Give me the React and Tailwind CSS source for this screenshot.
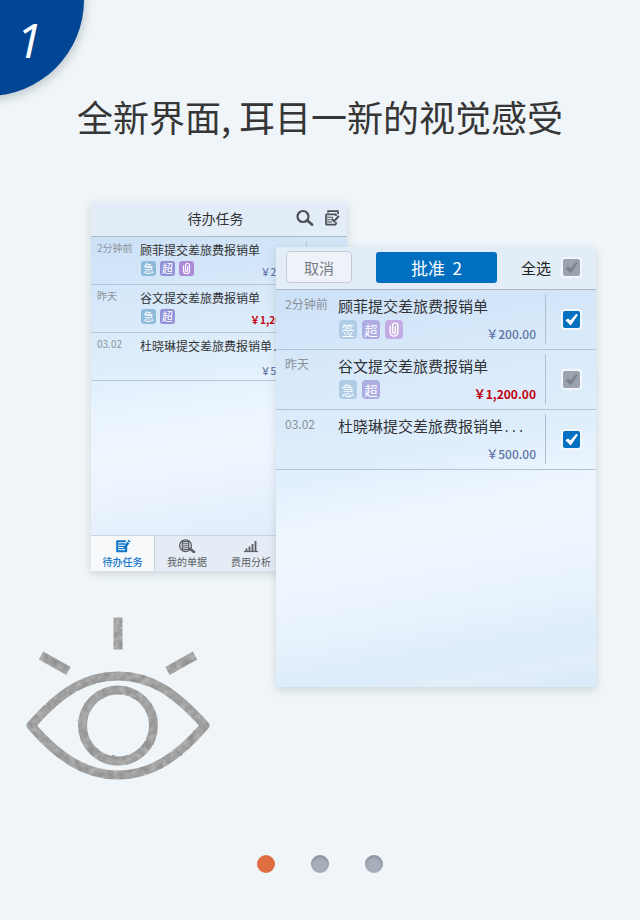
import React from "react";

const TONES = {
  blue: "bg-[#8dbad9]",
  violet: "bg-[#9091d8]",
  purple: "bg-[#ad8ad8]",
  paleBlue: "bg-[#aecde5]",
  paleViolet: "bg-[#aeade3]",
  palePurple: "bg-[#c3ace3]",
};

const pendingTasks = [
  { time: "2分钟前", title: "顾菲提交差旅费报销单", tags: [["急", "blue"], ["超", "violet"], ["clip", "purple"]], price: "￥200.00" },
  { time: "昨天", title: "谷文提交差旅费报销单", tags: [["急", "blue"], ["超", "violet"]], price: "￥1,200.00", urgent: true },
  { time: "03.02", title: "杜晓琳提交差旅费报销单", more: true, tags: [], price: "￥500.00" },
];

const approvalTasks = [
  { time: "2分钟前", title: "顾菲提交差旅费报销单", tags: [["签", "paleBlue"], ["超", "paleViolet"], ["clip", "palePurple"]], price: "￥200.00", checked: true },
  { time: "昨天", title: "谷文提交差旅费报销单", tags: [["急", "paleBlue"], ["超", "paleViolet"]], price: "￥1,200.00", urgent: true, checked: false },
  { time: "03.02", title: "杜晓琳提交差旅费报销单", more: true, tags: [], price: "￥500.00", checked: true },
];

function ClipIcon({ className }) {
  return (
    <svg viewBox="0 0 18 20" className={className} fill="none" stroke="white" strokeWidth="1.5" strokeLinecap="round" aria-hidden="true">
      <path d="M5 6.5v6.5a4 4 0 0 0 8 0V6a2.700 2.700 0 0 0-5.400 0v6.500a1.400 1.400 0 0 0 2.800 0V7" />
    </svg>
  );
}

function Tag({ label, tone, small }) {
  const size = small ? "h-[15px] w-[15px] rounded-[3px] text-[11px]" : "h-[19px] w-[18px] rounded text-[13px]";
  return (
    <span className={`flex items-center justify-center leading-none text-white ${size} ${TONES[tone]}`}>
      {label === "clip" ? <ClipIcon className="h-full w-full" /> : label}
    </span>
  );
}

function Dots({ small }) {
  return <span className={`font-['Liberation_Mono',monospace] ${small ? "text-[10px]" : "text-xs"}`}>...</span>;
}

function Tick({ label, defaultChecked }) {
  return (
    <span className="relative flex h-[21px] w-[21px]">
      <input
        type="checkbox"
        aria-label={label}
        defaultChecked={defaultChecked}
        className="peer h-full w-full appearance-none rounded border-2 border-[#f3f7fc] bg-[#9ba4ae] checked:bg-[#0070c1]"
      />
      <svg
        viewBox="0 0 21 21"
        className="pointer-events-none absolute inset-0 h-full w-full fill-[#7c858f] peer-checked:fill-white"
        aria-hidden="true"
      >
        <path d="M4.400 11.300 7 9.400l2.300 2.200 6-6.800 1.600 1.200L9.700 16.600z" />
      </svg>
    </span>
  );
}

function SearchIcon() {
  return (
    <svg viewBox="0 0 18 18" className="h-[18px] w-[18px]" fill="none" stroke="#4c4f54" aria-hidden="true">
      <circle cx="7" cy="7.500" r="5.500" strokeWidth="2.200" />
      <path d="m11.300 11.500 4.700 4" strokeWidth="2.800" strokeLinecap="round" />
    </svg>
  );
}

function BatchIcon() {
  return (
    <svg viewBox="0 0 16 16" className="h-4 w-4" fill="none" stroke="#4c4f54" aria-hidden="true">
      <path d="M4 2.800V1.200H14V4" strokeWidth="1.700" strokeLinejoin="round" />
      <path d="M12 6V4.300H2.500L2 5v9l.5.700h8.800L12 14v-2" strokeWidth="1.700" strokeLinejoin="round" />
      <path d="M3 7.300h6M3 9.700h3.500M3 12h5" strokeWidth="1.100" />
      <path d="m7.500 8.800 2.600 2.400 4.800-5.400" strokeWidth="2" />
    </svg>
  );
}

function TaskIcon() {
  return (
    <svg viewBox="0 0 16 14" className="h-[14px] w-4" fill="none" stroke="currentColor" aria-hidden="true">
      <path d="M10.800 2.200H2.200v10h9V8" strokeWidth="2" strokeLinejoin="round" />
      <path d="M3.500 5h7M3.500 7.300h6M3.500 9.700h4.500" strokeWidth="1.300" />
      <path d="m9 10 4.300-6.500" strokeWidth="2.400" />
      <path d="m13.700 2.900.8-1.400" strokeWidth="2.600" />
    </svg>
  );
}

function BillIcon() {
  return (
    <svg viewBox="0 0 18 14" className="h-[14px] w-[18px]" fill="none" stroke="currentColor" aria-hidden="true">
      <circle cx="7.500" cy="6.700" r="5.900" strokeWidth="1.300" />
      <path d="M4.300 2.700h6.400v8H4.300z" strokeWidth="1.200" />
      <path d="M4.500 4.700h6M4.500 6.700h6M4.500 8.700h6" strokeWidth="1.100" />
      <path d="m12 9.800 4 3.200" strokeWidth="2.600" strokeLinecap="round" />
    </svg>
  );
}

function ChartIcon() {
  return (
    <svg viewBox="0 0 16 14" className="h-[14px] w-4" fill="none" stroke="currentColor" aria-hidden="true">
      <path d="M1 12.500h14" strokeWidth="1.200" />
      <path d="M3.500 12V9.500M6.500 12V7.500M9.500 12V5M12.500 12V2" strokeWidth="1.800" />
    </svg>
  );
}

function TaskListScreen() {
  const tabs = [
    ["待办任务", TaskIcon],
    ["我的单据", BillIcon],
    ["费用分析", ChartIcon],
  ];
  return (
    <section className="col-start-1 row-start-1 ml-[67px] flex h-[369px] w-64 flex-col self-start justify-self-start bg-[linear-gradient(172deg,#cde1f7_9%,#d5e7f9_24%,#dfeefc_42%,#edf6fe_58%,#eef5fe_70%,#e3effc_84%,#dceafa_92%)] shadow-[0_3px_8px_rgba(90,100,105,0.22)]">
      <header className="grid h-[35px] grid-cols-3 items-center border-b border-[#adb9c8] bg-[#e3edf8] pb-[2px] pr-[7px]">
        <h2 className="col-start-2 whitespace-nowrap text-center text-sm leading-none text-[#333]">待办任务</h2>
        <div className="flex items-center justify-end gap-[10px]">
          <button type="button" aria-label="搜索"><SearchIcon /></button>
          <button type="button" aria-label="批量"><BatchIcon /></button>
        </div>
      </header>
      <ul>
        {pendingTasks.map((task) => (
          <li key={task.title} className="flex h-[48px] border-b border-[#b9c6d6] pl-[6px] pt-1">
            <time className="w-[43px] shrink-0 whitespace-nowrap text-[10px] leading-[14px] text-[#8d949d]">{task.time}</time>
            <div className="flex min-w-0 flex-1 flex-col">
              <p className="whitespace-nowrap text-xs leading-[18px] text-[#333]">
                {task.title}
                {task.more && <Dots small />}
              </p>
              <div className="flex items-start justify-between">
                <span className="flex gap-1 pl-px pt-[2px]">
                  {task.tags.map(([label, tone]) => <Tag key={label} label={label} tone={tone} small />)}
                </span>
                <span className={`mt-[5px] text-[10px] leading-[16px] ${task.urgent ? "font-bold text-[#c3000e]" : "font-medium text-[#5b6fa5]"}`}>
                  {task.price}
                </span>
              </div>
            </div>
            <span className="ml-1 mr-10 h-10 w-px bg-[#b9c8d9]" />
          </li>
        ))}
      </ul>
      <nav className="mt-auto grid h-9 grid-cols-4 border-t border-[#c9d2dd] bg-[#e5ecf5]">
        {tabs.map(([label, Icon], i) => (
          <button
            key={label}
            type="button"
            className={`flex flex-col items-center gap-[2px] pt-[3px] text-[10px] leading-[14px] ${i === 0 ? "border-r border-[#c9d2dd] bg-[#f7f9fb] font-medium text-[#0d74c8]" : "text-[#5a5d62]"}`}
          >
            <Icon />
            {label}
          </button>
        ))}
      </nav>
    </section>
  );
}

function ApprovalScreen() {
  return (
    <section className="z-10 col-start-1 row-start-1 mr-5 mt-[45px] h-[440px] w-80 justify-self-end bg-[linear-gradient(170deg,#cde1f7_9%,#d8e9fa_28%,#dfeefc_46%,#eef6fe_58%,#eff5fe_70%,#e8f3fd_78%,#e3effb_84%,#dcecfa_90%,#e2eefa_94%,#d9eaf9_100%)] shadow-[0_3px_8px_rgba(90,100,105,0.22)]">
      <header className="flex h-[43px] items-center border-b border-[#a9b6c6] bg-[#e3edf8] pb-[2px] pl-[10px]">
        <button type="button" className="h-8 w-[66px] rounded border border-[#c5ccd7] bg-[#eff3f9] text-[15px] leading-none text-[#777c84]">
          取消
        </button>
        <button type="button" className="ml-6 h-[31px] w-[121px] rounded-[3px] bg-[#006fc0] text-[17px] leading-none text-white">
          批准&nbsp; 2
        </button>
        <div className="ml-auto flex items-center gap-[10px] pr-[14px] text-[15px] leading-none text-[#222]">
          <span>全选</span>
          <Tick label="全选" />
        </div>
      </header>
      <ul>
        {approvalTasks.map((task) => (
          <li key={task.title} className="flex h-[60px] border-b border-[#b6c3d2] pl-[9px] pt-1">
            <time className="w-[53px] shrink-0 whitespace-nowrap pt-[2px] text-xs leading-4 text-[#8b919a]">{task.time}</time>
            <div className="flex min-w-0 flex-1 flex-col">
              <p className="whitespace-nowrap text-[15px] leading-6 text-[#303236]">
                {task.title}
                {task.more && <Dots />}
              </p>
              <div className="flex items-start justify-between">
                <span className="flex gap-[5px] pl-px pt-[2px]">
                  {task.tags.map(([label, tone]) => <Tag key={label} label={label} tone={tone} />)}
                </span>
                <span className={`mt-2 text-xs leading-4 ${task.urgent ? "font-bold text-[#c3000e]" : "font-medium text-[#5e74a5]"}`}>
                  {task.price}
                </span>
              </div>
            </div>
            <div className="ml-[9px] flex h-[50px] w-[51px] items-center justify-center border-l border-[#b0bfd0]">
              <Tick label={task.title} defaultChecked={task.checked} />
            </div>
          </li>
        ))}
      </ul>
    </section>
  );
}

function EyeSketch() {
  return (
    <svg viewBox="0 0 200 180" className="-ml-1 -mt-[77px] h-[180px] w-[200px]" aria-hidden="true">
      <defs>
        <filter id="chalk" x="0" y="0" width="200" height="180" filterUnits="userSpaceOnUse" colorInterpolationFilters="sRGB">
          <feTurbulence type="fractalNoise" baseFrequency="0.25" numOctaves="1" seed="4" result="grain" />
          <feDisplacementMap in="SourceGraphic" in2="grain" scale="2" xChannelSelector="R" yChannelSelector="G" result="rough" />
          <feTurbulence type="fractalNoise" baseFrequency="0.16" numOctaves="2" seed="9" />
          <feColorMatrix values="0.22 0 0 0 0.52  0.22 0 0 0 0.52  0.22 0 0 0 0.52  0 0 0 0 1" />
          <feComposite in2="rough" operator="in" />
        </filter>
      </defs>
      <g fill="none" stroke="#9b9b9b" strokeWidth="9" filter="url(#chalk)">
        <path d="M11 115.500C40 82.500 65 66 98 66S155.500 82.500 185 115.500C157.500 147.500 130.500 165 98 165S38.500 147.500 11 115.500z" strokeLinejoin="round" />
        <circle cx="98" cy="115.500" r="35.500" />
        <path d="M98 7.500v32M21 45.500 48.500 61M175 45.500 147.500 61" />
      </g>
    </svg>
  );
}

export default function App() {
  return (
    <main className="relative flex min-h-screen flex-col overflow-hidden bg-[#eff5f8] font-['Noto_Sans_CJK_SC',sans-serif]">
      <div className="absolute -left-[108px] -top-24 h-48 w-48 rounded-full bg-[#004694] shadow-[2px_4px_8px_rgba(80,90,100,0.25)]" />
      <span className="absolute left-4 top-4 font-['Open_Sans',sans-serif] text-[48px] font-medium italic leading-[48px] text-white">1</span>

      <h1 className="pt-[90px] text-center text-[36px] leading-[52px] text-[#363636]">
        全新界面<span className="pr-2">,</span>耳目一新的视觉感受
      </h1>

      <div className="mt-[60px] grid px-6">
        <TaskListScreen />
        <ApprovalScreen />
        <EyeSketch />
      </div>

      <nav className="mt-[65px] flex justify-center gap-9 pb-[47px]">
        <button type="button" aria-label="1" aria-current="true" className="h-[18px] w-[18px] rounded-full bg-[#df6d42]" />
        <button type="button" aria-label="2" className="h-[18px] w-[18px] rounded-full bg-[#a8adba] shadow-[inset_0_2px_3px_rgba(90,95,110,0.4)]" />
        <button type="button" aria-label="3" className="h-[18px] w-[18px] rounded-full bg-[#a8adba] shadow-[inset_0_2px_3px_rgba(90,95,110,0.4)]" />
      </nav>
    </main>
  );
}
